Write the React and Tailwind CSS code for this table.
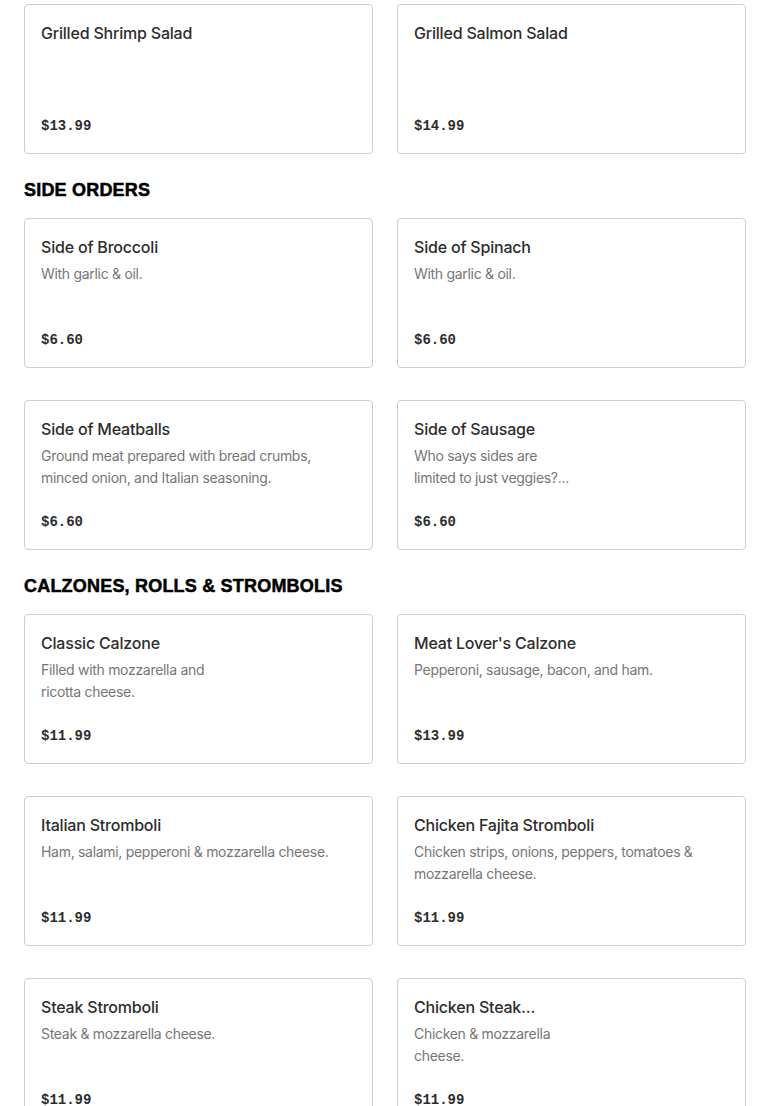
const sections = [
  {
    title: null,
    items: [
      { name: 'Grilled Shrimp Salad', desc: [], price: '$13.99' },
      { name: 'Grilled Salmon Salad', desc: [], price: '$14.99' },
    ],
  },
  {
    title: 'SIDE ORDERS',
    items: [
      { name: 'Side of Broccoli', desc: ['With garlic & oil.'], price: '$6.60' },
      { name: 'Side of Spinach', desc: ['With garlic & oil.'], price: '$6.60' },
      {
        name: 'Side of Meatballs',
        desc: ['Ground meat prepared with bread crumbs,', 'minced onion, and Italian seasoning.'],
        price: '$6.60',
      },
      { name: 'Side of Sausage', desc: ['Who says sides are', 'limited to just veggies?...'], price: '$6.60' },
    ],
  },
  {
    title: 'CALZONES, ROLLS & STROMBOLIS',
    items: [
      { name: 'Classic Calzone', desc: ['Filled with mozzarella and', 'ricotta cheese.'], price: '$11.99' },
      { name: "Meat Lover's Calzone", desc: ['Pepperoni, sausage, bacon, and ham.'], price: '$13.99' },
      { name: 'Italian Stromboli', desc: ['Ham, salami, pepperoni & mozzarella cheese.'], price: '$11.99' },
      {
        name: 'Chicken Fajita Stromboli',
        desc: ['Chicken strips, onions, peppers, tomatoes &', 'mozzarella cheese.'],
        price: '$11.99',
      },
      { name: 'Steak Stromboli', desc: ['Steak & mozzarella cheese.'], price: '$11.99' },
      { name: 'Chicken Steak...', desc: ['Chicken & mozzarella', 'cheese.'], price: '$11.99' },
    ],
  },
];

function MenuCard({ item }) {
  return (
    <div className="h-[150px] flex flex-col justify-between rounded-[4px] border border-[#cfcfcf] bg-white pt-4 px-4 pb-[17px]">
      <div>
        <h3 className="text-[16px] leading-6 font-medium tracking-[-0.2px] text-[#2d2d2d] font-['Inter',sans-serif]">
          {item.name}
        </h3>
        {item.desc.length > 0 && (
          <p className="mt-1 text-[14px] leading-[22px] tracking-[-0.3px] text-[#767676] font-['Inter',sans-serif]">
            {item.desc.map((line, i) => (
              <span key={i} className="block">{line}</span>
            ))}
          </p>
        )}
      </div>
      <div className="text-[14px] leading-5 font-bold text-[#2d2d2d] font-['Liberation_Mono',monospace]">
        {item.price}
      </div>
    </div>
  );
}

export default function App() {
  return (
    <div className="min-h-screen bg-white px-6 pt-1 font-['Inter',sans-serif]">
      {sections.map((section, idx) => (
        <div key={idx}>
          {section.title && (
            <h2 className="mt-[22px] mb-[14px] text-[18px] leading-7 font-bold tracking-[0.2px] text-black font-['Liberation_Sans',Arial,sans-serif] [-webkit-text-stroke:0.5px_black]">
              {section.title}
            </h2>
          )}
          <div className="grid grid-cols-2 gap-x-6 gap-y-8">
            {section.items.map(item => (
              <MenuCard key={item.name} item={item} />
            ))}
          </div>
        </div>
      ))}
    </div>
  );
}
